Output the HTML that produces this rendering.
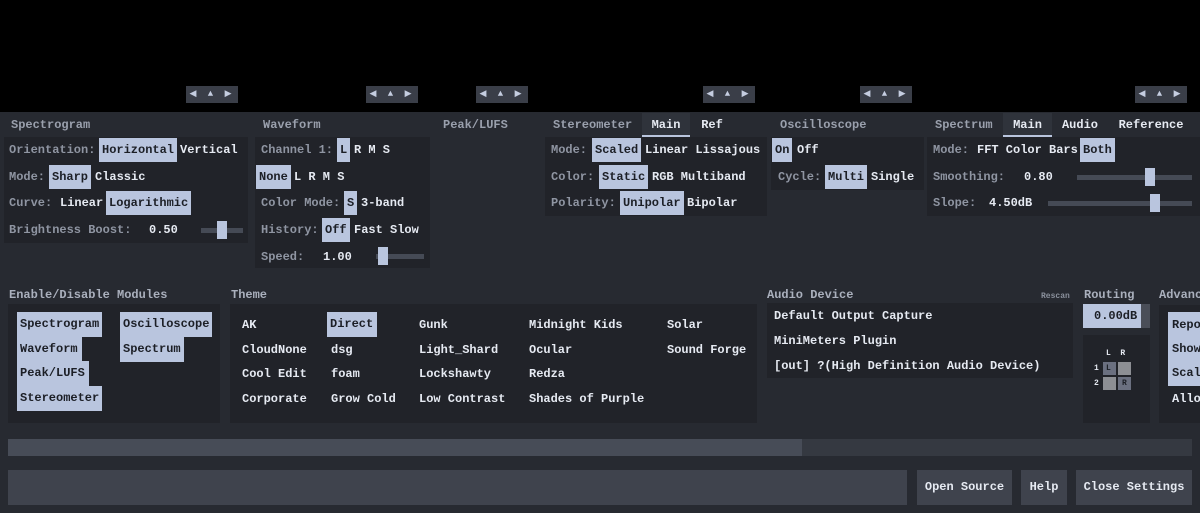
<!DOCTYPE html><html><head><style>
*{margin:0;padding:0;box-sizing:border-box}
body{width:1200px;height:513px;background:#272a31;font-family:"Liberation Mono",monospace;font-size:12px;color:#e6eaf2;position:relative;overflow:hidden}
.a{position:absolute;white-space:pre}
.top{left:0;top:0;width:1200px;height:112px;background:#000}
.arr{position:absolute;top:86px;width:52px;height:17px;background:#3a3e48;color:#c5cde0;font-size:9px;line-height:17px;text-align:center;letter-spacing:3px}
.p{position:absolute;background:#212329}
.h{position:absolute;color:#9aa0ad;font-weight:bold;line-height:14px}
.l{position:absolute;color:#8f95a2;line-height:24px;font-weight:bold}
.i{position:absolute;line-height:24px;font-weight:bold;padding:0 3px;height:24px;white-space:pre}
.s{background:#b9c5de;color:#1c1f26}
.tab{position:absolute;top:113px;height:24px;line-height:24px;font-weight:bold;text-align:center}
.tab.on{background:#2f333b;border-bottom:2px solid #b9c5de}
.tr{position:absolute;height:5px;background:#454a55}
.th{position:absolute;width:10px;height:18px;background:#b9c5de}
.btn{position:absolute;top:470px;height:35px;background:#3f434d;line-height:35px;text-align:center;font-weight:bold}
</style></head><body>
<div class="a top"></div>
<div class="arr" style="left:186px">◀ ▲ ▶</div>
<div class="arr" style="left:366px">◀ ▲ ▶</div>
<div class="arr" style="left:476px">◀ ▲ ▶</div>
<div class="arr" style="left:703px">◀ ▲ ▶</div>
<div class="arr" style="left:860px">◀ ▲ ▶</div>
<div class="arr" style="left:1135px">◀ ▲ ▶</div>

<!-- headers -->
<div class="h" style="left:11px;top:118px">Spectrogram</div>
<div class="h" style="left:263px;top:118px">Waveform</div>
<div class="h" style="left:443px;top:118px">Peak/LUFS</div>
<div class="h" style="left:553px;top:118px">Stereometer</div>
<div class="tab on" style="left:642px;width:48px">Main</div>
<div class="tab" style="left:695px;width:34px">Ref</div>
<div class="h" style="left:780px;top:118px">Oscilloscope</div>
<div class="h" style="left:935px;top:118px">Spectrum</div>
<div class="tab on" style="left:1003px;width:49px">Main</div>
<div class="tab" style="left:1057px;width:46px">Audio</div>
<div class="tab" style="left:1114px;width:74px">Reference</div>

<!-- spectrogram -->
<div class="p" style="left:4px;top:137px;width:244px;height:106px"></div>
<div class="l" style="left:9px;top:138px">Orientation:</div>
<div class="i s" style="left:99px;top:138px">Horizontal</div>
<div class="i" style="left:177px;top:138px">Vertical</div>
<div class="l" style="left:9px;top:165px">Mode:</div>
<div class="i s" style="left:49px;top:165px">Sharp</div>
<div class="i" style="left:92px;top:165px">Classic</div>
<div class="l" style="left:9px;top:191px">Curve:</div>
<div class="i" style="left:57px;top:191px">Linear</div>
<div class="i s" style="left:106px;top:191px">Logarithmic</div>
<div class="l" style="left:9px;top:218px">Brightness Boost:</div>
<div class="i" style="left:146px;top:218px">0.50</div>
<div class="tr" style="left:201px;top:228px;width:42px"></div>
<div class="th" style="left:217px;top:221px"></div>

<!-- waveform -->
<div class="p" style="left:255px;top:137px;width:175px;height:131px"></div>
<div class="l" style="left:261px;top:138px">Channel 1:</div>
<div class="i s" style="left:337px;top:138px">L</div>
<div class="i" style="left:351px;top:138px">R M S</div>
<div class="i s" style="left:256px;top:165px">None</div>
<div class="i" style="left:291px;top:165px">L R M S</div>
<div class="l" style="left:261px;top:191px">Color Mode:</div>
<div class="i s" style="left:344px;top:191px">S</div>
<div class="i" style="left:358px;top:191px">3-band</div>
<div class="l" style="left:261px;top:218px">History:</div>
<div class="i s" style="left:322px;top:218px">Off</div>
<div class="i" style="left:351px;top:218px">Fast Slow</div>
<div class="l" style="left:261px;top:245px">Speed:</div>
<div class="i" style="left:320px;top:245px">1.00</div>
<div class="tr" style="left:376px;top:254px;width:48px"></div>
<div class="th" style="left:378px;top:247px"></div>

<!-- stereometer -->
<div class="p" style="left:545px;top:137px;width:222px;height:79px"></div>
<div class="l" style="left:551px;top:138px">Mode:</div>
<div class="i s" style="left:592px;top:138px">Scaled</div>
<div class="i" style="left:642px;top:138px">Linear Lissajous</div>
<div class="l" style="left:551px;top:165px">Color:</div>
<div class="i s" style="left:599px;top:165px">Static</div>
<div class="i" style="left:649px;top:165px">RGB Multiband</div>
<div class="l" style="left:551px;top:191px">Polarity:</div>
<div class="i s" style="left:620px;top:191px">Unipolar</div>
<div class="i" style="left:684px;top:191px">Bipolar</div>

<!-- oscilloscope -->
<div class="p" style="left:771px;top:137px;width:153px;height:53px"></div>
<div class="i s" style="left:772px;top:138px">On</div>
<div class="i" style="left:794px;top:138px">Off</div>
<div class="l" style="left:778px;top:165px">Cycle:</div>
<div class="i s" style="left:825px;top:165px">Multi</div>
<div class="i" style="left:868px;top:165px">Single</div>

<!-- spectrum -->
<div class="p" style="left:927px;top:137px;width:273px;height:79px"></div>
<div class="l" style="left:933px;top:138px">Mode:</div>
<div class="i" style="left:974px;top:138px">FFT Color Bars</div>
<div class="i s" style="left:1080px;top:138px">Both</div>
<div class="l" style="left:933px;top:165px">Smoothing:</div>
<div class="i" style="left:1021px;top:165px">0.80</div>
<div class="tr" style="left:1077px;top:175px;width:115px"></div>
<div class="th" style="left:1145px;top:168px"></div>
<div class="l" style="left:933px;top:191px">Slope:</div>
<div class="i" style="left:986px;top:191px">4.50dB</div>
<div class="tr" style="left:1048px;top:201px;width:144px"></div>
<div class="th" style="left:1150px;top:194px"></div>

<!-- bottom headers -->
<div class="h" style="left:9px;top:288px;color:#aab0bd">Enable/Disable Modules</div>
<div class="h" style="left:231px;top:288px;color:#aab0bd">Theme</div>
<div class="h" style="left:767px;top:288px;color:#aab0bd">Audio Device</div>
<div class="h" style="left:1041px;top:290px;font-size:8px;color:#8a909c">Rescan</div>
<div class="h" style="left:1084px;top:288px;color:#aab0bd">Routing</div>
<div class="h" style="left:1159px;top:288px;color:#aab0bd">Advanced</div>

<!-- modules -->
<div class="p" style="left:8px;top:304px;width:212px;height:119px"></div>
<div class="i s" style="left:17px;top:312px;width:85px;height:25px;line-height:25px">Spectrogram</div>
<div class="i s" style="left:17px;top:337px;width:65px;height:25px;line-height:25px">Waveform</div>
<div class="i s" style="left:17px;top:361px;width:72px;height:25px;line-height:25px">Peak/LUFS</div>
<div class="i s" style="left:17px;top:386px;width:85px;height:25px;line-height:25px">Stereometer</div>
<div class="i s" style="left:120px;top:312px;width:92px;height:25px;line-height:25px">Oscilloscope</div>
<div class="i s" style="left:120px;top:337px;width:64px;height:25px;line-height:25px">Spectrum</div>

<!-- theme -->
<div class="p" style="left:230px;top:304px;width:527px;height:119px"></div>
<div class="i" style="left:239px;top:313px">AK</div>
<div class="i" style="left:239px;top:338px">CloudNone</div>
<div class="i" style="left:239px;top:362px">Cool Edit</div>
<div class="i" style="left:239px;top:387px">Corporate</div>
<div class="i s" style="left:327px;top:312px;width:50px;height:25px;line-height:25px">Direct</div>
<div class="i" style="left:328px;top:338px">dsg</div>
<div class="i" style="left:328px;top:362px">foam</div>
<div class="i" style="left:328px;top:387px">Grow Cold</div>
<div class="i" style="left:416px;top:313px">Gunk</div>
<div class="i" style="left:416px;top:338px">Light_Shard</div>
<div class="i" style="left:416px;top:362px">Lockshawty</div>
<div class="i" style="left:416px;top:387px">Low Contrast</div>
<div class="i" style="left:526px;top:313px">Midnight Kids</div>
<div class="i" style="left:526px;top:338px">Ocular</div>
<div class="i" style="left:526px;top:362px">Redza</div>
<div class="i" style="left:526px;top:387px">Shades of Purple</div>
<div class="i" style="left:664px;top:313px">Solar</div>
<div class="i" style="left:664px;top:338px">Sound Forge</div>

<!-- audio device -->
<div class="p" style="left:767px;top:303px;width:306px;height:75px"></div>
<div class="p" style="left:757px;top:378px;width:0;height:0"></div>
<div class="i" style="left:771px;top:304px">Default Output Capture</div>
<div class="i" style="left:771px;top:329px">MiniMeters Plugin</div>
<div class="i" style="left:771px;top:354px">[out] ?(High Definition Audio Device)</div>

<!-- routing -->
<div class="a" style="left:1083px;top:304px;width:67px;height:24px;background:#4a4e58"></div>
<div class="i s" style="left:1083px;top:304px;width:58px;padding:0 0 0 11px">0.00dB</div>
<div class="p" style="left:1083px;top:335px;width:67px;height:88px"></div>
<div class="a" style="left:1106px;top:349px;font-size:8px;font-weight:bold">L  R</div>
<div class="a" style="left:1094px;top:364px;font-size:8px;font-weight:bold">1</div>
<div class="a" style="left:1094px;top:379px;font-size:8px;font-weight:bold">2</div>
<div class="a" style="left:1103px;top:362px;width:13px;height:13px;background:#6b7080;font-size:8px;line-height:13px;padding-left:3px;font-weight:bold;color:#1c1f26">L</div>
<div class="a" style="left:1118px;top:362px;width:13px;height:13px;background:#8d8f94"></div>
<div class="a" style="left:1103px;top:377px;width:13px;height:13px;background:#8d8f94"></div>
<div class="a" style="left:1118px;top:377px;width:13px;height:13px;background:#6b7080;font-size:8px;line-height:13px;padding-left:4px;font-weight:bold;color:#1c1f26">R</div>

<!-- advanced -->
<div class="p" style="left:1159px;top:305px;width:41px;height:118px"></div>
<div class="a s" style="left:1168px;top:312px;width:32px;height:74px"></div>
<div class="i" style="left:1169px;top:313px;color:#1c1f26">Repo</div>
<div class="i" style="left:1169px;top:337px;color:#1c1f26">Show</div>
<div class="i" style="left:1169px;top:361px;color:#1c1f26">Scal</div>
<div class="i" style="left:1169px;top:387px">Allo</div>

<!-- progress -->
<div class="a" style="left:8px;top:439px;width:1184px;height:17px;background:#353941"></div>
<div class="a" style="left:8px;top:439px;width:794px;height:17px;background:#474c57"></div>

<!-- bottom -->
<div class="a" style="left:8px;top:470px;width:899px;height:35px;background:#3f434d"></div>
<div class="btn" style="left:917px;width:95px">Open Source</div>
<div class="btn" style="left:1021px;width:46px">Help</div>
<div class="btn" style="left:1076px;width:116px">Close Settings</div>
</body></html>
